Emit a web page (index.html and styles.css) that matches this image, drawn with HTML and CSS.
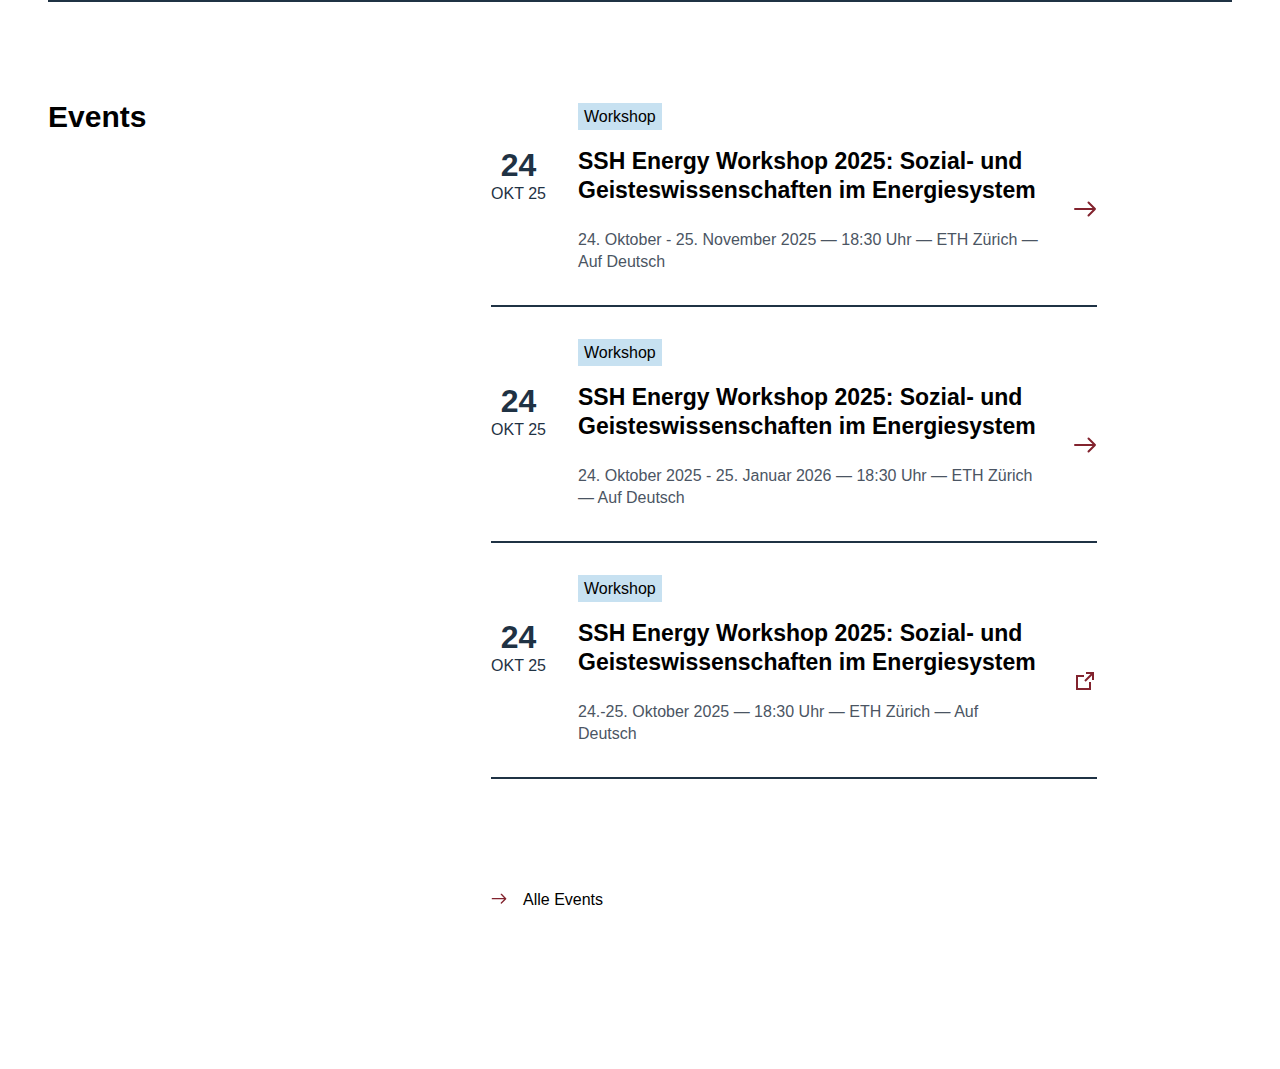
FILE: index.html
```html
<!DOCTYPE html>
<html lang="de">
<head>
<meta charset="utf-8">
<meta name="viewport" content="width=device-width, initial-scale=1">
<title>Events</title>
<link rel="stylesheet" href="styles.css">
</head>
<body>
<main class="page">
<section class="events">
<h2 class="events-title">Events</h2>
<div class="events-content">
<ul class="event-list">
<li><a class="event" href="#event-1">
<span class="tag">Workshop</span>
<time class="date" datetime="2025-10-24"><span class="day">24</span><span class="month">OKT 25</span></time>
<div class="event-body">
<h3 class="event-title">SSH Energy Workshop 2025: Sozial- und Geisteswissenschaften im Energiesystem</h3>
<p class="meta">24. Oktober - 25. November 2025 — 18:30 Uhr — ETH Zürich — Auf Deutsch</p></div>
<svg class="icon" viewBox="0 0 24 24" aria-hidden="true"><path d="M2 11H22M15.5 4.500L22 11L15.500 17.500"/></svg>
</a></li>
<li><a class="event" href="#event-2">
<span class="tag">Workshop</span>
<time class="date" datetime="2025-10-24"><span class="day">24</span><span class="month">OKT 25</span></time>
<div class="event-body">
<h3 class="event-title">SSH Energy Workshop 2025: Sozial- und Geisteswissenschaften im Energiesystem</h3>
<p class="meta">24. Oktober 2025 - 25. Januar 2026 — 18:30 Uhr — ETH Zürich — Auf Deutsch</p></div>
<svg class="icon" viewBox="0 0 24 24" aria-hidden="true"><path d="M2 11H22M15.5 4.500L22 11L15.500 17.500"/></svg>
</a></li>
<li><a class="event" href="#event-3">
<span class="tag">Workshop</span>
<time class="date" datetime="2025-10-24"><span class="day">24</span><span class="month">OKT 25</span></time>
<div class="event-body">
<h3 class="event-title">SSH Energy Workshop 2025: Sozial- und Geisteswissenschaften im Energiesystem</h3>
<p class="meta">24.-25. Oktober 2025 — 18:30 Uhr — ETH Zürich — Auf Deutsch</p></div>
<svg class="icon icon-external" viewBox="0 0 24 24" aria-hidden="true"><path d="M11 6H4V19H17V12M13 3H20V10M20 3L12 11"/></svg>
</a></li>
</ul>
<a class="all-link" href="#all"><svg class="icon-small" viewBox="0 0 24 24" aria-hidden="true"><path d="M2 10H22M15.5 3.500L22 10L15.500 16.500"/></svg>Alle Events</a>
</div>
</section>
</main>
</body>
</html>
```
FILE: styles.css
```css
* { box-sizing: border-box; }
body { margin: 0; background: #fff; color: #000; font: 16px/22px "Liberation Sans", Arial, sans-serif; }
.page { padding: 0 48px; }
.events { display: grid; grid-template-columns: 443px minmax(0, 606px); border-top: 2px solid #1f3244; padding: 101px 0 156px; }
.events-title { margin: 0; font-size: 30px; line-height: 28px; }
.event-list { display: grid; gap: 32px; list-style: none; margin: 0; padding: 0; }
.event { display: grid; grid-template-columns: 55px minmax(0, 1fr) 24px; column-gap: 32px; row-gap: 17px; align-items: center; padding-bottom: 32px; border-bottom: 2px solid #1f3244; color: inherit; text-decoration: none; }
.tag { grid-column: 2 / 4; justify-self: start; padding: 3px 6px 2px; background: #c7e1f1; }
.date { grid-column: 1; align-self: start; text-align: center; color: #1f3244; }
.day, .month { display: block; white-space: nowrap; }
.day { font-size: 32px; font-weight: 700; line-height: 36px; }
.event-title { margin: 0 0 24px; font-size: 23px; line-height: 29px; }
.meta { margin: 0; color: #4b5563; }
.icon, .icon-small { fill: none; stroke: #82232e; stroke-width: 2; stroke-linecap: round; stroke-linejoin: round; }
.icon { width: 24px; height: 24px; }
.icon-external { stroke-linecap: butt; stroke-linejoin: miter; }
.icon-small { width: 16px; height: 16px; }
.all-link { display: inline-flex; align-items: center; gap: 16px; margin-top: 110px; color: #000; text-decoration: none; }
```
